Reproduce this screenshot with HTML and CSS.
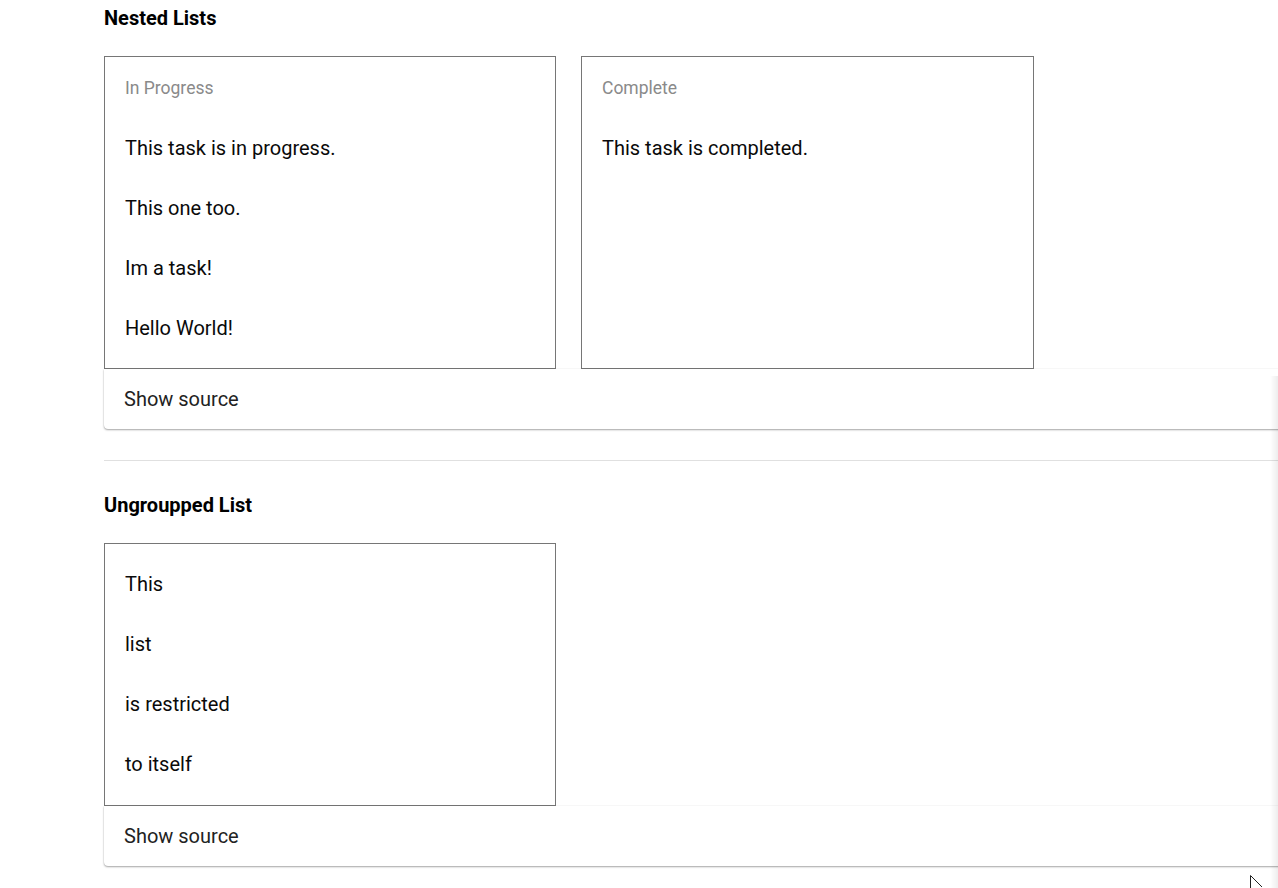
FILE: index.html
```html
<!DOCTYPE html>
<html lang="en">
<head>
<meta charset="utf-8">
<title>Lists</title>
<link rel="stylesheet" href="styles.css">
</head>
<body>
<main class="page">
  <section class="example">
    <h3 class="example-title">Nested Lists</h3>
    <div class="lists">
      <div class="list">
        <div class="list-label">In Progress</div>
        <div class="item">This task is in progress.</div>
        <div class="item">This one too.</div>
        <div class="item">Im a task!</div>
        <div class="item">Hello World!</div>
      </div>
      <div class="list">
        <div class="list-label">Complete</div>
        <div class="item">This task is completed.</div>
      </div>
    </div>
    <div class="source-card">Show source</div>
  </section>
  <hr class="divider">
  <section class="example">
    <h3 class="example-title">Ungroupped List</h3>
    <div class="lists">
      <div class="list list-plain">
        <div class="item">This</div>
        <div class="item">list</div>
        <div class="item">is restricted</div>
        <div class="item">to itself</div>
      </div>
    </div>
    <div class="source-card">Show source</div>
  </section>
</main>
<div class="edge-shadow"></div>
<svg class="cursor" width="14" height="14" viewBox="0 0 14 14"><path d="M0.5 0.5 L0.5 13 M0.5 0.5 L12 12" fill="none" stroke="#222" stroke-width="1"/></svg>
</body>
</html>
```

FILE: styles.css
```css
html, body {
  margin: 0;
  padding: 0;
  background: #fff;
  overflow: hidden;
}

body {
  font-family: Roboto, "Liberation Sans", Arial, sans-serif;
  color: #111;
  width: 1278px;
  height: 888px;
}

.page {
  padding: 8px 0 0 104px;
}

.example-title {
  margin: 0 0 28px;
  font-size: 20px;
  line-height: 20px;
  font-weight: 700;
  color: #000;
}

.lists {
  display: flex;
  gap: 25px;
  align-items: stretch;
}

.list {
  width: 450px;
  border: 1px solid #767676;
  padding: 10px 0;
  box-sizing: content-box;
}

.list + .list {
  width: 451px;
}

.list-plain {
  padding-bottom: 11px;
}

.list-label {
  padding: 0 20px;
  font-size: 17.5px;
  line-height: 42px;
  margin-bottom: 9px;
  color: #8a8a8a;
}

.item {
  padding: 0 20px;
  font-size: 20px;
  line-height: 60px;
  height: 60px;
  color: #0a0a0a;
}

.source-card {
  width: 1240px;
  height: 60px;
  line-height: 60px;
  padding-left: 20px;
  font-size: 20px;
  color: #222;
  background: #fff;
  border-radius: 0 0 4px 4px;
  box-shadow: 0 1px 2px rgba(0,0,0,0.35), 0 0 1px rgba(0,0,0,0.18);
  position: relative;
}

.divider {
  margin: 31px 0 34px;
  border: 0;
  border-top: 1px solid #e0e0e0;
  width: 1300px;
}

.edge-shadow {
  position: fixed;
  right: 0;
  top: 376px;
  bottom: 0;
  width: 8px;
  background: linear-gradient(to right, rgba(0,0,0,0), rgba(0,0,0,0.07));
}

.cursor {
  position: fixed;
  left: 1250px;
  top: 875px;
}
```
